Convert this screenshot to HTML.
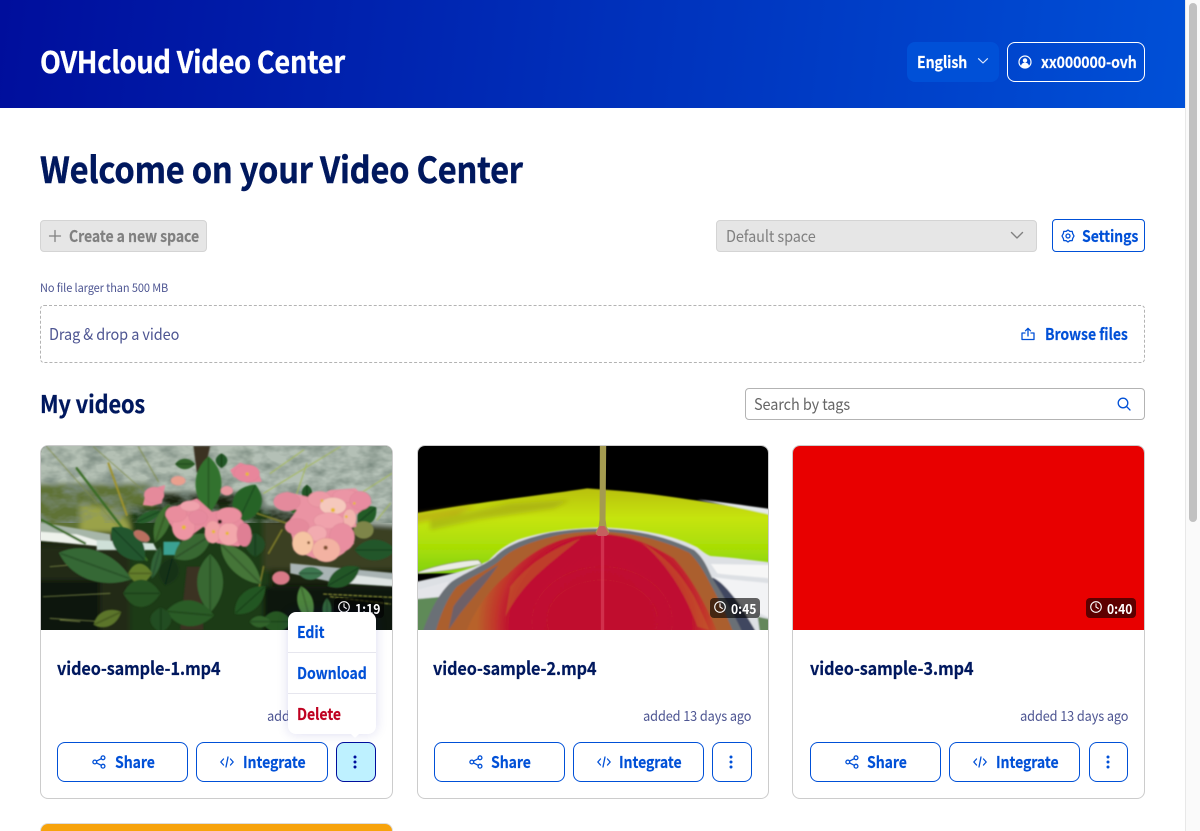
<!DOCTYPE html>
<html lang="en"><head><meta charset="utf-8"><title>OVHcloud Video Center</title>
<style>
*{box-sizing:border-box}
html,body{margin:0;padding:0;width:1200px;height:831px;overflow:hidden;background:#fff}
body{font-family:"Noto Sans CJK JP","Liberation Sans",sans-serif;position:relative;color:#4d5592}
.a{position:absolute;white-space:nowrap}
.t{position:absolute;white-space:nowrap;line-height:24px;height:24px;transform-origin:0 50%}
.b{font-weight:700;-webkit-text-stroke:.15px currentColor}
.blue{color:#0050d7}
.s88{transform:scaleX(.88)}
.s90{transform:scaleX(.905)}
.btn{position:absolute;border:1px solid #0050d7;border-radius:8px;background:#fff}
svg{position:absolute;display:block;overflow:visible}
.ic{fill:none;stroke:#0050d7;stroke-width:1.3;stroke-linecap:round;stroke-linejoin:round}
.card{position:absolute;top:445px;width:353px;height:354px;border:1px solid #ccc;border-radius:8px;background:#fff}
.img{position:absolute;left:0;top:0;width:351px;height:184px;border-radius:7px 7px 0 0;overflow:hidden}
.badge{position:absolute;top:152px;height:20px;width:50px;border-radius:4px;background:rgba(0,0,0,.6)}
.badge span{position:absolute;left:21px;top:0;line-height:20px;font-size:13.5px;font-weight:700;color:#fff;transform:scaleX(.9);transform-origin:0 50%}
.title{position:absolute;left:16px;top:209px;line-height:26px;font-size:18px;font-weight:700;color:#00185e;white-space:nowrap;letter-spacing:-.1px;transform:scaleX(.9);transform-origin:0 50%;-webkit-text-stroke:.2px currentColor}
.added{position:absolute;right:17px;top:260px;line-height:20px;font-size:14px;color:#4d5592;white-space:nowrap;letter-spacing:-.1px;transform:scaleX(.907);transform-origin:100% 50%}
.label{position:absolute;line-height:36px;top:0;font-size:16px;font-weight:700;color:#0050d7;white-space:nowrap;letter-spacing:-.1px;transform:scaleX(.88);transform-origin:0 50%;-webkit-text-stroke:.15px currentColor}
</style></head><body>

<div class="a" style="left:0;top:0;width:1185px;height:108px;background:linear-gradient(97deg,#000e9c 0%,#0050d7 100%)"></div>
<div class="t b s90" style="left:40px;top:39px;height:42px;line-height:42px;font-size:30px;color:#fff;letter-spacing:-.25px;-webkit-text-stroke:.35px #fff">OVHcloud Video Center</div>

<div class="a" style="left:907px;top:42px;width:92px;height:40px;background:#0050d7;border-radius:8px"></div>
<div class="t b s88" style="left:917px;top:49px;font-size:16px;color:#fff;letter-spacing:-.1px">English</div>
<svg style="left:977px;top:57px" width="12" height="8" viewBox="0 0 12 8"><path d="M1.500 1.700 6 6l4.500-4.300" fill="none" stroke="#dfe8fb" stroke-width="1.200" stroke-linecap="round" stroke-linejoin="round"/></svg>
<div class="a" style="left:1007px;top:42px;width:138px;height:40px;border:1px solid #fff;border-radius:8px"></div>
<svg style="left:1018px;top:55px" width="14" height="14" viewBox="0 0 14 14"><circle cx="7" cy="7" r="6" fill="none" stroke="#fff" stroke-width="1.200"/><circle cx="7" cy="5.400" r="2.200" fill="#fff"/><path d="M3 11c.5-2.500 2-3.200 4-3.200s3.500.7 4 3.200l-2 1.500H5z" fill="#fff"/></svg>
<div class="t b s88" style="left:1040.500px;top:49px;font-size:16px;color:#fff;letter-spacing:-.1px">xx000000-ovh</div>

<div class="t b s90" style="left:40px;top:143px;height:50px;line-height:50px;font-size:36px;color:#00185e;letter-spacing:-.22px;-webkit-text-stroke:.45px #00185e">Welcome on your Video Center</div>

<div class="a" style="left:40px;top:220px;width:167px;height:32px;background:#e6e6e6;border:1px solid #d4d4d4;border-radius:4px"></div>
<svg style="left:49px;top:230px" width="12" height="12" viewBox="0 0 12 12"><path d="M6 .5v11M.5 6h11" stroke="#808080" stroke-width="1.300" stroke-linecap="round"/></svg>
<div class="t b s88" style="left:69px;top:223px;font-size:16px;color:#808080;letter-spacing:-.1px">Create a new space</div>

<div class="a" style="left:716px;top:220px;width:321px;height:32px;background:#e6e6e6;border:1px solid #d4d4d4;border-radius:4px"></div>
<div class="t s90" style="left:726px;top:223px;font-size:16px;color:#808080;letter-spacing:-.1px">Default space</div>
<svg style="left:1010px;top:231px" width="14" height="9" viewBox="0 0 14 9"><path d="M1.500 1.500 7 7l5.500-5.500" fill="none" stroke="#808080" stroke-width="1.400" stroke-linecap="round" stroke-linejoin="round"/></svg>

<div class="a" style="left:1052px;top:219px;width:93px;height:33px;border:1px solid #0050d7;border-radius:4px;background:#fff"></div>
<svg style="left:1061px;top:229px" width="14" height="14" viewBox="0 0 14 14"><path d="M7 1l1.800 1.300 2.400.1.500 2.200L13 7l-1.300 2.400-.5 2.200-2.400.1L7 13l-1.800-1.300-2.400-.1-.5-2.200L1 7l1.300-2.400.5-2.200 2.400-.1z" class="ic"/><circle class="ic" cx="7" cy="7" r="2"/></svg>
<div class="t b s88" style="left:1082px;top:223px;font-size:16px;color:#0050d7;letter-spacing:-.1px">Settings</div>

<div class="t" style="left:40px;top:276px;font-size:11.500px;color:#4d5592;letter-spacing:-.1px;transform:scaleX(.955)">No file larger than 500 MB</div>

<div class="a" style="left:40px;top:305px;width:1105px;height:58px;border:1px dashed #b3b3b3;border-radius:4px"></div>
<div class="t s90" style="left:49px;top:321px;font-size:16px;color:#4d5592;letter-spacing:-.1px">Drag &amp; drop a video</div>
<svg style="left:1021px;top:327px" width="14" height="14" viewBox="0 0 14 14"><path class="ic" d="M7 9V1.500M4.500 3.800 7 1.300l2.500 2.500M4 6H1v6.500h12V6h-3"/></svg>
<div class="t b s88" style="left:1044.500px;top:321px;font-size:16px;color:#0050d7;letter-spacing:-.1px">Browse files</div>

<div class="t b s90" style="left:40px;top:387px;height:32px;line-height:32px;font-size:24px;color:#00185e;letter-spacing:-.1px;-webkit-text-stroke:.3px #00185e">My videos</div>

<div class="a" style="left:745px;top:388px;width:400px;height:32px;border:1px solid #b3b3b3;border-radius:4px;background:#fff"></div>
<div class="t s90" style="left:754px;top:391px;font-size:16px;color:#666;letter-spacing:-.1px">Search by tags</div>
<svg style="left:1117px;top:397px" width="14" height="14" viewBox="0 0 14 14"><circle class="ic" cx="6" cy="6" r="4.800"/><path class="ic" d="M9.600 9.600 13 13"/></svg>

<!-- CARD 1 -->
<div class="card" style="left:40px">
 <div class="img">
 <svg width="351" height="184" viewBox="33 18 1052 552" preserveAspectRatio="none" style="left:0;top:0">
  <defs>
   <g id="lf"><path d="M-1 0C-.5-1.300.4-1.300 1 0C.4 1.300-.5 1.300-1 0z"/><path d="M-.95 0H.95" fill="none" stroke="#000" stroke-opacity=".18" stroke-width="2" vector-effect="non-scaling-stroke"/></g>
   <filter id="bl" x="-5%" y="-5%" width="110%" height="110%"><feGaussianBlur stdDeviation="2"/></filter>
   <filter id="bl2" x="-10%" y="-10%" width="120%" height="120%"><feGaussianBlur stdDeviation="8"/></filter>
   <filter id="dap" x="0" y="0" width="100%" height="100%"><feTurbulence type="fractalNoise" baseFrequency=".018 .03" numOctaves="3" seed="4"/><feColorMatrix values="0 0 0 0 .2  0 0 0 0 .26  0 0 0 0 .22  1.800 0 0 0 -.62"/></filter>
  </defs>
  <rect x="0" y="0" width="1120" height="600" fill="#1a2310"/>
  <g filter="url(#bl2)">
   <rect x="-30" y="-30" width="1180" height="190" fill="#b4c0b4"/>
   <path d="M650-30h500v290l-170-10-280-50z" fill="#b4c0b6"/>
   <path d="M-30 130h390l40 140-430 20z" fill="#5f7236"/>
   <path d="M150 190l110 20 60 70-170 0z" fill="#9aa248"/>
   <path d="M-30 320l290-10 130 60-60 230H-30z" fill="#232b14"/>
   <path d="M-30 420h240v180H-30z" fill="#10160a"/>
   <path d="M300 200h420v400H300z" fill="#1c3a18"/>
   <path d="M700 240l450 20v130H700z" fill="#3a4024"/>
   <path d="M700 440h450v160H700z" fill="#0d120b"/>
  </g>
  <rect x="33" y="18" width="1052" height="230" filter="url(#dap)"/>
  <g filter="url(#bl)">
   <path d="M-10 240 240 282 245 318-10 300z" fill="#a7b6a9"/>
   <path d="M-10 272 140 283 235 312 240 322-10 298z" fill="#eef2ec"/>
   <path d="M200 300l170 10 10 20-180 0z" fill="#cfe0d8"/>
   <path d="M400 305h50l-10 40h-40z" fill="#3aa192"/>
   <path d="M780 370l320 30v40l-175-10-145-30z" fill="#a9b4b4"/>
   <path d="M930 400l170 20v20l-170-12z" fill="#dfe5e3"/>
   <g fill="none" stroke-linecap="round">
    <path d="M50 20l240 270M190 20l170 150M325 20l60 105M60 380l120-10M40 470l200-10M60 535l160 10M90 540l60 5" stroke="#7f8c48" stroke-width="2.500"/>
    <path d="M140 85 350 360M35 240l130 70" stroke="#3a6c24" stroke-width="7"/>
    <path d="M700 160 930 20M1085 100l-110 70M830 70l-40 120M1080 190l-40 50M720 100l100-70" stroke="#a5b95a" stroke-width="3"/>
    <path d="M880 462l205 10M900 470l180 22" stroke="#c8c84a" stroke-width="2.500" stroke-dasharray="10 5"/>
    <path d="M235 70 290 225" stroke="#a0932a" stroke-width="6"/>
    <path d="M680 220l90 30M700 380l-25 120M715 340l40-70" stroke="#7f7c2a" stroke-width="5"/>
   </g>
   <path d="M490 18h50l-15 70-25 10zM470 380l40 0 10 190h-70z" fill="#3a3020"/>
   <!-- leaves -->
   <g style="filter:brightness(.82)">
    <use href="#lf" transform="translate(195 378) rotate(20) scale(116 46)" fill="#3f7f3f"/>
    <use href="#lf" transform="translate(295 312) rotate(45) scale(70 40)" fill="#2b6a38"/>
    <use href="#lf" transform="translate(535 135) rotate(90) scale(86 40)" fill="#3e8b37"/>
    <use href="#lf" transform="translate(650 190) rotate(115) scale(62 44)" fill="#2f7a30"/>
    <use href="#lf" transform="translate(574 62) rotate(90) scale(22 18)" fill="#2a6a2d"/>
    <use href="#lf" transform="translate(465 72) scale(30 16)" fill="#3a7a35"/>
    <use href="#lf" transform="translate(540 430) rotate(90) scale(88 40)" fill="#437f3c"/>
    <use href="#lf" transform="translate(488 320) rotate(-32) scale(66 34)" fill="#457f3d"/>
    <use href="#lf" transform="translate(632 372) rotate(45) scale(86 32)" fill="#548f44"/>
    <use href="#lf" transform="translate(675 315) rotate(90) scale(36 30)" fill="#2a5f2d"/>
    <use href="#lf" transform="translate(396 250) rotate(110) scale(62 22)" fill="#4f8a3c"/>
    <use href="#lf" transform="translate(355 230) rotate(-25) scale(40 15)" fill="#2f7434"/>
    <use href="#lf" transform="translate(378 368) rotate(105) scale(50 14)" fill="#3d7a45"/>
    <use href="#lf" transform="translate(416 395) rotate(105) scale(42 30)" fill="#1a3e1d"/>
    <use href="#lf" transform="translate(330 400) scale(36 30)" fill="#7a9a34"/>
    <use href="#lf" transform="translate(335 460) scale(56 42)" fill="#2f6529"/>
    <use href="#lf" transform="translate(480 520) rotate(5) scale(72 40)" fill="#326f2e"/>
    <use href="#lf" transform="translate(392 540) rotate(90) scale(38 32)" fill="#2a5e28"/>
    <use href="#lf" transform="translate(660 480) rotate(-42) scale(62 30)" fill="#2c6a2c"/>
    <use href="#lf" transform="translate(232 535) rotate(-25) scale(46 24)" fill="#6f8e32"/>
    <use href="#lf" transform="translate(740 545) scale(46 32)" fill="#2f6a2c"/>
    <use href="#lf" transform="translate(690 545) scale(32 18)" fill="#3c7a35"/>
    <use href="#lf" transform="translate(1035 330) scale(62 32)" fill="#2c6a34"/>
    <use href="#lf" transform="translate(1010 225) rotate(-40) scale(36 26)" fill="#2a7030"/>
    <use href="#lf" transform="translate(940 410) rotate(-30) scale(56 28)" fill="#2c6a30"/>
    <use href="#lf" transform="translate(842 400) scale(38 20)" fill="#4c9060"/>
    <use href="#lf" transform="translate(826 490) rotate(75) scale(54 24)" fill="#5ea14a"/>
    <use href="#lf" transform="translate(800 208) rotate(25) scale(34 16)" fill="#357c35"/>
    <use href="#lf" transform="translate(830 160) rotate(90) scale(26 16)" fill="#2a6a2f"/>
    <use href="#lf" transform="translate(890 510) rotate(90) scale(36 14)" fill="#3e7d48"/>
    <ellipse cx="1000" cy="270" rx="30" ry="26" fill="#9aa258"/>
   </g>
   <!-- flower base blobs -->
   <path d="M405 225 445 195 500 175 545 215 600 205 640 245 665 290 625 320 560 310 520 260 465 300 430 270z" fill="#e88c9e"/>
   <path d="M730 190 770 155 850 175 900 150 975 145 1025 190 975 225 978 260 940 270 972 310 940 340 900 365 850 355 790 330 785 290 770 250 800 210z" fill="#ea93a3"/>
   <path d="M600 90 630 68 680 85 695 125 650 128 610 110z" fill="#e8869b"/>
   <path d="M338 195 350 150 405 135 395 190 365 198z" fill="#e58a9b"/>
   <!-- petals -->
   <g stroke="#d27f90" stroke-width="1">
    <ellipse cx="460" cy="262" rx="34" ry="38" fill="#ee95a3"/>
    <ellipse cx="438" cy="222" rx="32" ry="24" fill="#e98d9d"/>
    <ellipse cx="504" cy="232" rx="28" ry="22" fill="#e68a9e"/>
    <ellipse cx="480" cy="198" rx="30" ry="16" fill="#f0a2ac"/>
    <ellipse cx="548" cy="276" rx="24" ry="34" fill="#f0a0a4"/>
    <ellipse cx="596" cy="282" rx="32" ry="34" fill="#f3a7ab"/>
    <ellipse cx="596" cy="226" rx="38" ry="24" fill="#ea8f9f"/>
    <ellipse cx="642" cy="284" rx="22" ry="36" fill="#df7f94"/>
    <ellipse cx="650" cy="100" rx="38" ry="26" fill="#e8869b"/>
    <ellipse cx="372" cy="165" rx="30" ry="24" fill="#e58a9b"/>
    <ellipse cx="444" cy="122" rx="22" ry="14" fill="#e9a08e"/>
    <ellipse cx="590" cy="152" rx="18" ry="14" fill="#e99aa0"/>
    <ellipse cx="752" cy="414" rx="26" ry="20" fill="#d97a88"/>
    <ellipse cx="335" cy="288" rx="26" ry="14" transform="rotate(30 335 288)" fill="#b9705f"/>
    <ellipse cx="770" cy="185" rx="40" ry="28" fill="#e48a9c"/>
    <ellipse cx="868" cy="178" rx="36" ry="24" fill="#ec9aa6"/>
    <ellipse cx="945" cy="168" rx="38" ry="20" fill="#eb95a5"/>
    <ellipse cx="990" cy="182" rx="32" ry="28" fill="#e88ca0"/>
    <ellipse cx="908" cy="198" rx="40" ry="26" fill="#f5c8bc"/>
    <ellipse cx="958" cy="235" rx="20" ry="28" fill="#f2b4ae"/>
    <ellipse cx="895" cy="242" rx="45" ry="24" fill="#f0a2ac"/>
    <ellipse cx="800" cy="260" rx="36" ry="24" fill="#e58a9c"/>
    <ellipse cx="860" cy="280" rx="30" ry="24" fill="#f2abb0"/>
    <ellipse cx="935" cy="292" rx="38" ry="42" fill="#e98ea0"/>
    <ellipse cx="818" cy="310" rx="32" ry="36" fill="#f5c4a2"/>
    <ellipse cx="888" cy="330" rx="42" ry="36" fill="#f3b2a2"/>
   </g>
   <g fill="#e8b82e">
    <circle cx="461" cy="262" r="6"/><circle cx="550" cy="275" r="5"/><circle cx="591" cy="280" r="5"/><circle cx="651" cy="102" r="5"/><circle cx="908" cy="210" r="6"/><circle cx="875" cy="182" r="4"/><circle cx="972" cy="190" r="4"/><circle cx="948" cy="230" r="4"/>
   </g>
   <circle cx="569" cy="245" r="6" fill="#2a1a14"/>
   <circle cx="886" cy="323" r="6" fill="#7d4d2b"/><circle cx="835" cy="308" r="4" fill="#7d4d2b"/>
  </g>
 </svg>
 </div>
 <div class="badge" style="left:293px"><svg style="left:3px;top:2px" width="14" height="14" viewBox="0 0 14 14"><circle cx="7" cy="7" r="5.300" fill="none" stroke="#fff" stroke-width="1.100"/><path d="M7 3.800V7l2.300 1.500" fill="none" stroke="#fff" stroke-width="1.100" stroke-linecap="round"/></svg><span>1:19</span></div>
 <div class="title">video-sample-1.mp4</div>
 <div class="added">added 13 days ago</div>
 <div class="btn" style="left:16px;top:296px;width:131px;height:40px"><svg style="left:34px;top:12px" width="14" height="14" viewBox="0 0 14 14"><circle class="ic" cx="2.800" cy="7" r="1.900"/><circle class="ic" cx="11" cy="2.800" r="1.900"/><circle class="ic" cx="11" cy="11.200" r="1.900"/><path class="ic" d="M4.500 6.100 9.300 3.700M4.500 7.900l4.800 2.400"/></svg><span class="label" style="left:57px">Share</span></div>
 <div class="btn" style="left:155px;top:296px;width:132px;height:40px"><svg style="left:23px;top:12px" width="14" height="14" viewBox="0 0 14 14"><path class="ic" d="M3.500 4 .8 7l2.700 3M10.500 4l2.700 3-2.700 3M8 2 6 12"/></svg><span class="label" style="left:46px">Integrate</span></div>
 <div class="btn" style="left:295px;top:296px;width:40px;height:40px;background:#bef1ff;border-color:#000e9c"><svg style="left:16px;top:12px" width="4" height="14" viewBox="0 0 4 14"><circle cx="2" cy="2" r="1.500" fill="#000e9c"/><circle cx="2" cy="7" r="1.500" fill="#000e9c"/><circle cx="2" cy="12" r="1.500" fill="#000e9c"/></svg></div>
</div>

<!-- CARD 2 -->
<div class="card" style="left:416.500px;width:352.500px">
 <div class="img" style="width:350.500px">
 <svg width="351" height="184" viewBox="24 18 1050 552" preserveAspectRatio="none" style="left:0;top:0">
  <defs>
   <linearGradient id="gr" x1="0" y1="0" x2="0" y2="1"><stop offset="0" stop-color="#b9c00c"/><stop offset=".35" stop-color="#c6e408"/><stop offset=".7" stop-color="#a8de06"/><stop offset="1" stop-color="#82d20a"/></linearGradient>
   <radialGradient id="rd" gradientUnits="userSpaceOnUse" cx="570" cy="560" r="370"><stop offset="0" stop-color="#c00a2e"/><stop offset=".72" stop-color="#bf0a30"/><stop offset=".85" stop-color="#c2352c"/><stop offset="1" stop-color="#b8622c"/></radialGradient>
   <filter id="b3" x="-10%" y="-10%" width="120%" height="120%"><feGaussianBlur stdDeviation="2.500"/></filter>
   <filter id="b4" x="-10%" y="-10%" width="120%" height="120%"><feGaussianBlur stdDeviation="7"/></filter>
  </defs>
  <rect x="0" y="0" width="1100" height="600" fill="#000"/>
  <g filter="url(#b3)">
   <path d="M-10 225C170 190 400 165 530 145L570 148C680 155 780 170 860 182C950 195 1030 210 1110 226V400H-10z" fill="url(#gr)"/>
   <path d="M860 178C950 188 1030 200 1110 212V232C1040 215 950 195 860 178z" fill="#e4e8ea"/>
  </g>
  <g filter="url(#b4)">
   <path d="M60 240 300 190 480 180 430 205 200 240 60 270z" fill="#9a9a14" opacity=".5"/>
   <path d="M-10 225 200 195 140 225-10 255z" fill="#b28a14" opacity=".45"/>
  </g>
  <g filter="url(#b3)">
   <path d="M-10 432C60 415 160 400 235 362C260 335 280 318 320 300C400 272 490 264 570 262C680 264 790 285 860 322C880 338 890 345 900 348C960 352 1040 362 1110 372V600H-10z" fill="#dde0e4"/>
   <path d="M25 396C80 375 150 362 205 360L215 372C160 385 90 395 25 400z" fill="#eaece6" stroke="#8b9477" stroke-width="2"/>
   <path d="M900 372 1075 375V415C1010 408 950 405 920 400z" fill="#f6f6f6"/>
   <path d="M900 410C960 420 1030 425 1080 430V535L1000 500C970 470 930 430 900 410z" fill="#f2f3f5"/>
   <path d="M-10 458 115 425 100 470 40 482-10 475z" fill="#e4e5e9"/>
   <path d="M905 412C935 425 965 465 990 500L1050 600H930z" fill="#3f4660"/>
   <path d="M-10 480 100 470 60 600H-10z" fill="#5f8a58"/>
   <path d="M1040 530 1110 545V600H1050z" fill="#65875c"/>
   <path d="M30 600C55 520 85 460 125 425C170 395 225 375 255 350C285 318 340 296 420 278C480 268 530 266 570 266C660 268 760 285 850 330C880 355 890 385 905 415C940 470 975 530 1005 600z" fill="#6b6f76"/>
   <path d="M70 600C90 520 115 470 140 440C190 405 245 385 270 360C300 328 360 305 440 286C490 276 530 275 570 275C650 277 740 292 835 338C860 362 880 395 895 425C925 480 955 540 975 600z" fill="#ab5f2e"/>
   <path d="M160 600C185 520 235 450 290 405C340 355 400 310 480 292C520 284 550 282 575 282C640 285 700 300 790 355C840 410 885 490 930 600z" fill="url(#rd)"/>
   <path d="M300 440C340 390 400 335 510 295C470 330 400 380 350 435C320 470 300 500 285 530z" fill="#c05f2a" opacity=".6"/>
   <path d="M690 305C760 345 810 400 850 470C870 510 885 545 895 570L860 560C830 480 780 380 690 305z" fill="#c2622a" opacity=".55"/>
   <path d="M130 500C170 440 220 400 265 375C230 425 190 470 150 520L115 570z" fill="#5a607c" opacity=".75"/>
   <g fill="none" stroke="#cf3a30" stroke-width="3" opacity=".22"><ellipse cx="575" cy="540" rx="165" ry="120"/><ellipse cx="575" cy="545" rx="210" ry="165"/></g>
  </g>
  <path d="M568 18h19l-2 220 3 22 9 16c-6 6-12 10-21 10s-16-4-21-10l9-16 3-22z" fill="#a49b50"/>
  <path d="M567 258h15l14 24-9 6h-24l-8-6z" fill="#c5605f"/>
  <rect x="571" y="288" width="10" height="282" fill="#d8405a" opacity=".7"/>
 </svg>
 </div>
 <div class="badge" style="left:292.500px"><svg style="left:3px;top:2px" width="14" height="14" viewBox="0 0 14 14"><circle cx="7" cy="7" r="5.300" fill="none" stroke="#fff" stroke-width="1.100"/><path d="M7 3.800V7l2.300 1.500" fill="none" stroke="#fff" stroke-width="1.100" stroke-linecap="round"/></svg><span>0:45</span></div>
 <div class="title" style="left:15.500px">video-sample-2.mp4</div>
 <div class="added">added 13 days ago</div>
 <div class="btn" style="left:16px;top:296px;width:131px;height:40px"><svg style="left:34px;top:12px" width="14" height="14" viewBox="0 0 14 14"><circle class="ic" cx="2.800" cy="7" r="1.900"/><circle class="ic" cx="11" cy="2.800" r="1.900"/><circle class="ic" cx="11" cy="11.200" r="1.900"/><path class="ic" d="M4.500 6.100 9.300 3.700M4.500 7.900l4.800 2.400"/></svg><span class="label" style="left:56.500px">Share</span></div>
 <div class="btn" style="left:155px;top:296px;width:131px;height:40px"><svg style="left:23px;top:12px" width="14" height="14" viewBox="0 0 14 14"><path class="ic" d="M3.500 4 .8 7l2.700 3M10.500 4l2.700 3-2.700 3M8 2 6 12"/></svg><span class="label" style="left:45.500px">Integrate</span></div>
 <div class="btn" style="left:294.500px;top:296px;width:39.500px;height:40px"><svg style="left:16px;top:12px" width="4" height="14" viewBox="0 0 4 14"><circle cx="2" cy="2" r="1.500" fill="#0050d7"/><circle cx="2" cy="7" r="1.500" fill="#0050d7"/><circle cx="2" cy="12" r="1.500" fill="#0050d7"/></svg></div>
</div>

<!-- CARD 3 -->
<div class="card" style="left:792px;width:353px">
 <div class="img" style="background:#e80000"></div>
 <div class="badge" style="left:293px;background:rgba(0,0,0,.6)"><svg style="left:3px;top:2px" width="14" height="14" viewBox="0 0 14 14"><circle cx="7" cy="7" r="5.300" fill="none" stroke="#fff" stroke-width="1.100"/><path d="M7 3.800V7l2.300 1.500" fill="none" stroke="#fff" stroke-width="1.100" stroke-linecap="round"/></svg><span>0:40</span></div>
 <div class="title" style="left:17px">video-sample-3.mp4</div>
 <div class="added" style="right:16px">added 13 days ago</div>
 <div class="btn" style="left:17px;top:296px;width:131px;height:40px"><svg style="left:34px;top:12px" width="14" height="14" viewBox="0 0 14 14"><circle class="ic" cx="2.800" cy="7" r="1.900"/><circle class="ic" cx="11" cy="2.800" r="1.900"/><circle class="ic" cx="11" cy="11.200" r="1.900"/><path class="ic" d="M4.500 6.100 9.300 3.700M4.500 7.900l4.800 2.400"/></svg><span class="label" style="left:56px">Share</span></div>
 <div class="btn" style="left:156px;top:296px;width:131px;height:40px"><svg style="left:23px;top:12px" width="14" height="14" viewBox="0 0 14 14"><path class="ic" d="M3.500 4 .8 7l2.700 3M10.500 4l2.700 3-2.700 3M8 2 6 12"/></svg><span class="label" style="left:45.500px">Integrate</span></div>
 <div class="btn" style="left:296px;top:296px;width:39px;height:40px"><svg style="left:16px;top:12px" width="4" height="14" viewBox="0 0 4 14"><circle cx="2" cy="2" r="1.500" fill="#0050d7"/><circle cx="2" cy="7" r="1.500" fill="#0050d7"/><circle cx="2" cy="12" r="1.500" fill="#0050d7"/></svg></div>
</div>

<!-- POPUP -->
<div class="a" style="left:288px;top:612px;width:88px;height:122px;background:#fff;border-radius:8px;box-shadow:0 0 12px rgba(0,14,156,.14)"></div>
<div class="a" style="left:350px;top:733px;width:0;height:0;border-left:5px solid transparent;border-right:5px solid transparent;border-top:5px solid #fff"></div>
<div class="a" style="left:288px;top:652px;width:88px;height:1px;background:#e6e6ee"></div>
<div class="a" style="left:288px;top:693px;width:88px;height:1px;background:#e6e6ee"></div>
<div class="t b s88" style="left:297px;top:619px;font-size:16px;color:#0050d7;letter-spacing:-.1px">Edit</div>
<div class="t b s88" style="left:297px;top:660px;font-size:16px;color:#0050d7;letter-spacing:-.1px">Download</div>
<div class="t b s88" style="left:297px;top:701px;font-size:16px;color:#bf0020;letter-spacing:-.1px">Delete</div>

<!-- CARD 4 peek -->
<div class="a" style="left:40px;top:823px;width:353px;height:20px;background:#f7a30c;border:1px solid #ddd;border-bottom:0;border-radius:8px 8px 0 0"></div>

<!-- SCROLLBAR -->
<div class="a" style="left:1185px;top:0;width:15px;height:831px;background:#fafafa;border-left:1px solid #e8e8e8"></div>
<div class="a" style="left:1189px;top:3px;width:8px;height:519px;background:#c1c1c1;border-radius:4px"></div>

</body></html>
